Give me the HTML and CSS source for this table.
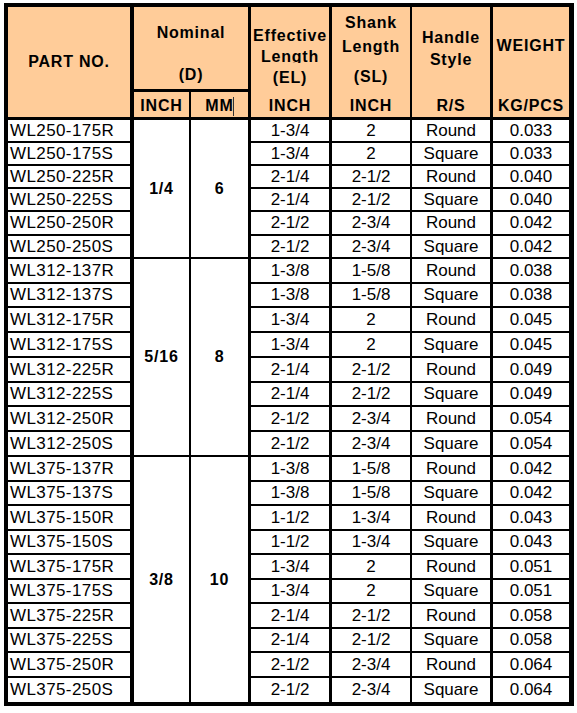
FILE: index.html
```html
<!DOCTYPE html>
<html>
<head>
<meta charset="utf-8">
<link rel="stylesheet" href="styles.css">
</head>
<body>
<div class="sheet">
  <div class="h c1 rs2 hb hp-part"><div class="l20">PART NO.</div></div>
  <div class="h c3 cs2 hb hp-nom"><div class="l20">Nominal</div><div class="l20 nom2">(D)</div></div>
  <div class="h c4 hp-eff"><div class="l21">Effective</div><div class="l21 clip">Length</div><div class="l21">(EL)</div></div>
  <div class="h c5 hp-shank"><div class="l24">Shank</div><div class="l24">Length</div><div class="l20 sh3">(SL)</div></div>
  <div class="h c6 hp-hand"><div class="l22">Handle</div><div class="l22">Style</div></div>
  <div class="h c7 hp-wt"><div class="l20">WEIGHT</div></div>
  <div class="h c2 hb sub">INCH</div>
  <div class="h c3 hb sub">MM<span class="cur"></span></div>
  <div class="h c4 hb sub">INCH</div>
  <div class="h c5 hb sub">INCH</div>
  <div class="h c6 hb sub">R/S</div>
  <div class="h c7 hb sub">KG/PCS</div>

  <div class="d c1 part">WL250-175R</div><div class="d c2 m g6">1/4</div><div class="d c3 m g6">6</div><div class="d c4">1-3/4</div><div class="d c5">2</div><div class="d c6">Round</div><div class="d c7">0.033</div>
  <div class="d c1 part">WL250-175S</div><div class="d c4">1-3/4</div><div class="d c5">2</div><div class="d c6">Square</div><div class="d c7">0.033</div>
  <div class="d c1 part">WL250-225R</div><div class="d c4">2-1/4</div><div class="d c5">2-1/2</div><div class="d c6">Round</div><div class="d c7">0.040</div>
  <div class="d c1 part">WL250-225S</div><div class="d c4">2-1/4</div><div class="d c5">2-1/2</div><div class="d c6">Square</div><div class="d c7">0.040</div>
  <div class="d c1 part">WL250-250R</div><div class="d c4">2-1/2</div><div class="d c5">2-3/4</div><div class="d c6">Round</div><div class="d c7">0.042</div>
  <div class="d c1 part">WL250-250S</div><div class="d c4">2-1/2</div><div class="d c5">2-3/4</div><div class="d c6">Square</div><div class="d c7">0.042</div>

  <div class="d c1 part">WL312-137R</div><div class="d c2 m g8">5/16</div><div class="d c3 m g8">8</div><div class="d c4">1-3/8</div><div class="d c5">1-5/8</div><div class="d c6">Round</div><div class="d c7">0.038</div>
  <div class="d c1 part">WL312-137S</div><div class="d c4">1-3/8</div><div class="d c5">1-5/8</div><div class="d c6">Square</div><div class="d c7">0.038</div>
  <div class="d c1 part">WL312-175R</div><div class="d c4">1-3/4</div><div class="d c5">2</div><div class="d c6">Round</div><div class="d c7">0.045</div>
  <div class="d c1 part">WL312-175S</div><div class="d c4">1-3/4</div><div class="d c5">2</div><div class="d c6">Square</div><div class="d c7">0.045</div>
  <div class="d c1 part">WL312-225R</div><div class="d c4">2-1/4</div><div class="d c5">2-1/2</div><div class="d c6">Round</div><div class="d c7">0.049</div>
  <div class="d c1 part">WL312-225S</div><div class="d c4">2-1/4</div><div class="d c5">2-1/2</div><div class="d c6">Square</div><div class="d c7">0.049</div>
  <div class="d c1 part">WL312-250R</div><div class="d c4">2-1/2</div><div class="d c5">2-3/4</div><div class="d c6">Round</div><div class="d c7">0.054</div>
  <div class="d c1 part">WL312-250S</div><div class="d c4">2-1/2</div><div class="d c5">2-3/4</div><div class="d c6">Square</div><div class="d c7">0.054</div>

  <div class="d c1 part">WL375-137R</div><div class="d c2 m g10 last">3/8</div><div class="d c3 m g10 last">10</div><div class="d c4">1-3/8</div><div class="d c5">1-5/8</div><div class="d c6">Round</div><div class="d c7">0.042</div>
  <div class="d c1 part">WL375-137S</div><div class="d c4">1-3/8</div><div class="d c5">1-5/8</div><div class="d c6">Square</div><div class="d c7">0.042</div>
  <div class="d c1 part">WL375-150R</div><div class="d c4">1-1/2</div><div class="d c5">1-3/4</div><div class="d c6">Round</div><div class="d c7">0.043</div>
  <div class="d c1 part">WL375-150S</div><div class="d c4">1-1/2</div><div class="d c5">1-3/4</div><div class="d c6">Square</div><div class="d c7">0.043</div>
  <div class="d c1 part">WL375-175R</div><div class="d c4">1-3/4</div><div class="d c5">2</div><div class="d c6">Round</div><div class="d c7">0.051</div>
  <div class="d c1 part">WL375-175S</div><div class="d c4">1-3/4</div><div class="d c5">2</div><div class="d c6">Square</div><div class="d c7">0.051</div>
  <div class="d c1 part">WL375-225R</div><div class="d c4">2-1/4</div><div class="d c5">2-1/2</div><div class="d c6">Round</div><div class="d c7">0.058</div>
  <div class="d c1 part">WL375-225S</div><div class="d c4">2-1/4</div><div class="d c5">2-1/2</div><div class="d c6">Square</div><div class="d c7">0.058</div>
  <div class="d c1 part">WL375-250R</div><div class="d c4">2-1/2</div><div class="d c5">2-3/4</div><div class="d c6">Round</div><div class="d c7">0.064</div>
  <div class="d c1 part last">WL375-250S</div><div class="d c4 last">2-1/2</div><div class="d c5 last">2-3/4</div><div class="d c6 last">Square</div><div class="d c7 last">0.064</div>
</div>
</body>
</html>
```

FILE: styles.css
```css
* { box-sizing: border-box; }

body {
  margin: 0;
  background: #ffffff;
  color: #000000;
  font-family: "Liberation Sans", Arial, sans-serif;
}

.sheet {
  display: grid;
  grid-template-columns: 126px 57px 60px 81px 80px 81px 76px;
  grid-template-rows:
    85px 28px
    23px 23px 23px 23px 24px 23px
    25px 24px 25px 25px 25px 24px 25px 25px
    25px 24px 25px 24px 25px 24px 25px 24px 25px 24px;
  width: 570px;
  margin: 3px 0 0 4px;
  border-top: 4px solid #000;
  border-left: 4px solid #000;
  border-right: 5px solid #000;
  border-bottom: 4px solid #000;
}

/* column right borders */
.c1 { border-right: 4px solid #000; }
.c2 { border-right: 2px solid #000; }
.c3 { border-right: 3px solid #000; }
.c4 { border-right: 3px solid #000; }
.c5 { border-right: 2px solid #000; }
.c6 { border-right: 3px solid #000; }
.c7 { border-right: 0; }

/* header */
.h {
  background: #ffcc99;
  font-weight: bold;
  font-size: 16px;
  letter-spacing: 0.8px;
  text-align: center;
  white-space: nowrap;
}
.hb { border-bottom: 3px solid #000; }
.rs2 { grid-row: span 2; }
.cs2 { grid-column: span 2; }

.l20 { line-height: 20px; }
.l21 { line-height: 21px; }
.l22 { line-height: 22px; }
.l24 { line-height: 24px; }

.hp-part { padding-top: 45px; }
.hp-nom { padding-top: 16px; }
.nom2 { margin-top: 22px; }
.hp-eff { padding-top: 18px; }
.clip { height: 17px; overflow: hidden; margin-bottom: 4px; }
.hp-shank { padding-top: 4px; }
.sh3 { margin-top: 8px; }
.hp-hand { padding-top: 20px; }
.hp-wt { padding-top: 29px; }

.sub {
  padding-top: 2px;
  line-height: 23px;
}

.cur {
  display: inline-block;
  width: 1px;
  height: 19px;
  margin-left: -0.8px;
  background: #333;
  vertical-align: -5px;
}

/* data */
.d {
  display: flex;
  align-items: center;
  justify-content: center;
  font-size: 17px;
  border-bottom: 2px solid #000;
  white-space: nowrap;
}
.part {
  justify-content: flex-start;
  padding-left: 2px;
  letter-spacing: 0.4px;
}
.m {
  font-weight: bold;
  font-size: 16px;
  letter-spacing: 0.8px;
}
.g6 { grid-row: span 6; }
.g8 { grid-row: span 8; }
.g10 { grid-row: span 10; }
.last { border-bottom: 0; }
```
